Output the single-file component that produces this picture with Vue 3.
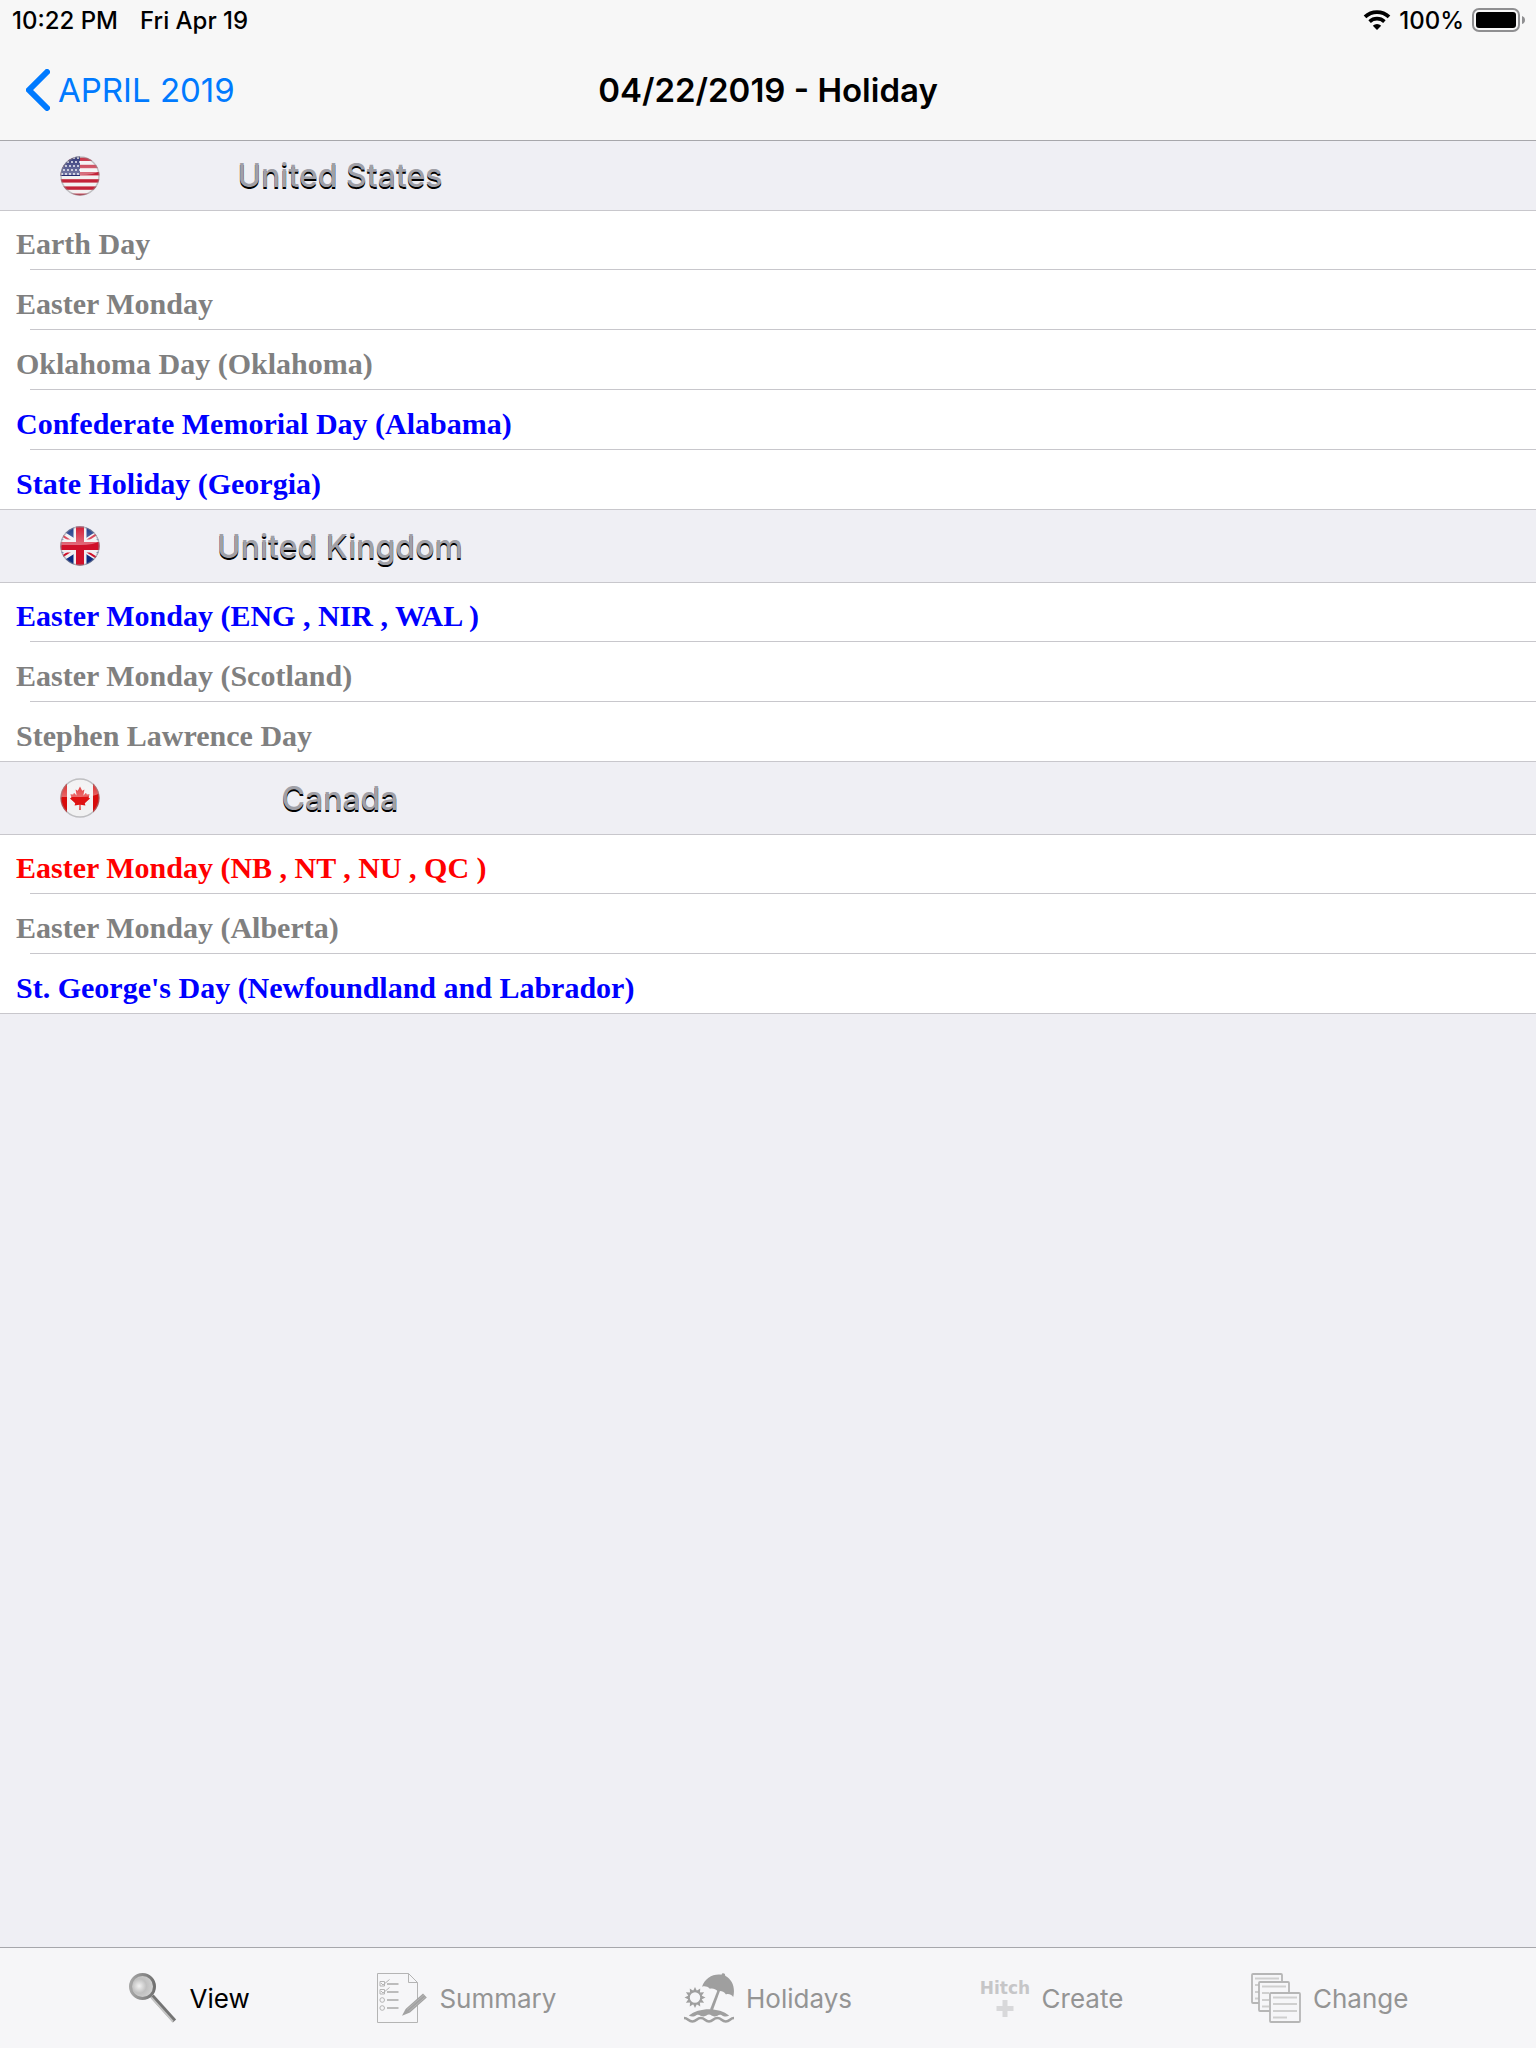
<script setup>
import { ref } from 'vue'

const activeTab = ref('view')

const sections = [
  {
    code: 'us',
    name: 'United States',
    holidays: [
      { title: 'Earth Day', type: 'normal' },
      { title: 'Easter Monday', type: 'normal' },
      { title: 'Oklahoma Day (Oklahoma)', type: 'normal' },
      { title: 'Confederate Memorial Day (Alabama)', type: 'regional' },
      { title: 'State Holiday (Georgia)', type: 'regional' }
    ]
  },
  {
    code: 'uk',
    name: 'United Kingdom',
    holidays: [
      { title: 'Easter Monday (ENG , NIR , WAL )', type: 'regional' },
      { title: 'Easter Monday (Scotland)', type: 'normal' },
      { title: 'Stephen Lawrence Day', type: 'normal' }
    ]
  },
  {
    code: 'ca',
    name: 'Canada',
    holidays: [
      { title: 'Easter Monday (NB , NT , NU , QC )', type: 'official' },
      { title: 'Easter Monday (Alberta)', type: 'normal' },
      { title: "St. George's Day (Newfoundland and Labrador)", type: 'regional' }
    ]
  }
]

const tabs = [
  { id: 'view', label: 'View' },
  { id: 'summary', label: 'Summary' },
  { id: 'holidays', label: 'Holidays' },
  { id: 'create', label: 'Create' },
  { id: 'change', label: 'Change' }
]

// rays of the sun in the Holidays icon
const rays = Array.from({ length: 12 }, (_, i) => i * 30)

// 5 rows of stars on the US flag
const stars = []
for (let row = 0; row < 5; row++) {
  for (let col = 0; col < 5; col++) {
    stars.push({ x: 2 + col * 4 + (row % 2) * 2, y: 2 + row * 4 })
  }
}
</script>

<template>
  <div class="page">
    <header class="top">
      <div class="status">
        <span>10:22 PM</span>
        <span>Fri Apr 19</span>
        <div class="status-right">
          <svg class="wifi" viewBox="0 0 28 20">
            <path d="M2 6.8 A17.5 17.5 0 0 1 26 6.8" fill="none" stroke="#000" stroke-width="3.8" />
            <path d="M6.6 11.6 A10.8 10.8 0 0 1 21.4 11.6" fill="none" stroke="#000" stroke-width="3.6" />
            <path d="M14 20 L9.8 15.8 A6 6 0 0 1 18.2 15.8 Z" />
          </svg>
          <span>100%</span>
          <svg class="battery" viewBox="0 0 54 24">
            <rect x="1" y="1" width="46" height="22" rx="6" fill="none" stroke="#8f8f91" stroke-width="2" />
            <rect x="4" y="4" width="40" height="16" rx="3" />
            <path d="M50 8 Q53 9 53 12 Q53 15 50 16 Z" fill="#8f8f91" />
          </svg>
        </div>
      </div>
      <nav class="navbar">
        <a class="back" href="#">
          <svg class="chevron" viewBox="0 0 24 42">
            <path d="M21 3 L3 21 L21 39" fill="none" stroke="#007aff" stroke-width="6" stroke-linecap="round" />
          </svg>
          <span>APRIL 2019</span>
        </a>
        <h1>04/22/2019 - Holiday</h1>
      </nav>
    </header>

    <main class="content">
      <section v-for="section in sections" :key="section.code" class="section">
        <div class="section-head">
          <svg class="flag" viewBox="0 0 40 40">
            <defs>
              <clipPath :id="`clip-${section.code}`"><circle cx="20" cy="20" r="19.5" /></clipPath>
              <linearGradient :id="`gloss-${section.code}`" x1="0" y1="0" x2="0" y2="1">
                <stop offset="0" stop-color="#fff" stop-opacity="0.05" />
                <stop offset="1" stop-color="#fff" stop-opacity="0.4" />
              </linearGradient>
            </defs>
            <g :clip-path="`url(#clip-${section.code})`">
              <g v-if="section.code === 'us'">
                <rect width="40" height="40" fill="#f3f1f2" />
                <rect v-for="n in 6" :key="n" y="0" width="40" height="3.4" :transform="`translate(0 ${(n - 1) * 7.2 + 1.6})`" fill="#c32338" />
                <rect width="20" height="20" fill="#262b70" />
                <circle v-for="(s, i) in stars" :key="i" :cx="s.x" :cy="s.y" r="0.9" fill="#fff" />
              </g>
              <g v-else-if="section.code === 'uk'">
                <rect width="40" height="40" fill="#0d2b80" />
                <path d="M-14 -2 L54 42 M54 -2 L-14 42" stroke="#f0eff2" stroke-width="7" />
                <path d="M-14 -1 L20 21 M54 -3 L20 19 M-14 41 L20 19 M54 43 L20 21" stroke="#d0102a" stroke-width="2" />
                <path d="M20 0 V40 M0 20 H40" stroke="#f0eff2" stroke-width="13" />
                <path d="M20 0 V40 M0 20 H40" stroke="#d0102a" stroke-width="8" />
              </g>
              <g v-else>
                <rect width="40" height="40" fill="#f1f1f2" />
                <rect width="7" height="40" fill="#d80a0a" />
                <rect x="33" width="7" height="40" fill="#d80a0a" />
                <path
                  d="M20 8.5 L22.2 12.8 L24.4 11.6 L23.4 17.4 L26 14.8 L26.8 16.6 L29.6 16.2 L28.6 19.6 L30 20.6 L24.8 25.2 L25.4 27.4 L20.5 26.8 L20.7 32 H19.3 L19.5 26.8 L14.6 27.4 L15.2 25.2 L10 20.6 L11.4 19.6 L10.4 16.2 L13.2 16.6 L14 14.8 L16.6 17.4 L15.6 11.6 L17.8 12.8 Z"
                  fill="#df1212" />
              </g>
              <path d="M0 0 H40 V15 Q34 19 20 19 T2 19 L0 20 Z" :fill="`url(#gloss-${section.code})`" />
            </g>
            <circle cx="20" cy="20" r="19" fill="none" stroke="#8c8c90" stroke-opacity="0.5" stroke-width="1.4" />
          </svg>
          <h2>{{ section.name }}</h2>
        </div>
        <ul class="rows">
          <li v-for="holiday in section.holidays" :key="holiday.title" :class="holiday.type">
            {{ holiday.title }}
          </li>
        </ul>
      </section>
    </main>

    <nav class="tabbar">
      <button
        v-for="tab in tabs"
        :key="tab.id"
        type="button"
        class="tab"
        :class="{ active: activeTab === tab.id }"
        @click="activeTab = tab.id">
        <svg class="tab-icon" viewBox="0 0 50 50">
          <g v-if="tab.id === 'view'">
            <defs>
              <radialGradient id="lens" cx="0.36" cy="0.48" r="0.6">
                <stop offset="0" stop-color="#f2f2f2" />
                <stop offset="0.5" stop-color="#c0c0c0" />
                <stop offset="1" stop-color="#d2d2d2" />
              </radialGradient>
              <linearGradient id="rim">
                <stop offset="0" stop-color="#a6a6a6" />
                <stop offset="1" stop-color="#717171" />
              </linearGradient>
            </defs>
            <path d="M24 23 L46.5 48" stroke="#747474" stroke-width="4.4" />
            <path d="M23.2 24.4 L45 48.6" stroke="#c4c4c4" stroke-width="1.8" />
            <circle cx="14.5" cy="13.5" r="12" fill="url(#lens)" stroke="url(#rim)" stroke-width="3" />
          </g>
          <g v-else-if="tab.id === 'summary'" fill="none" stroke="#b4b4b4">
            <path d="M31.5 0.5 H0.5 V49.5 H40.5 V9.5 Z V9.5 H40.5" />
            <path d="M10 11 H21.5 M10 19 H21.5 M10 27 H21.5 M10 35 H21.5" stroke="#bcbcbc" stroke-width="2" />
            <path d="M3 8.5 H7.5 V13 H3 Z M3 16.5 H7.5 V21 H3 Z M4 10 L6 12 L12.5 6.5 M4 18 L6 20 L12.5 14.5" />
            <circle cx="5.2" cy="27" r="2.3" />
            <circle cx="5.2" cy="35" r="2.3" />
            <path d="M46 20.5 L49.8 24.5 L33 39.5 L25 42.8 L28.6 36 Z" fill="#a2a2a2" stroke="none" />
            <path d="M30 36.5 L47 21.8 M31.8 38.4 L48.8 23.6" stroke="#bdbdbd" stroke-width="0.7" />
          </g>
          <g v-else-if="tab.id === 'holidays'" fill="#9f9f9f">
            <path v-for="angle in rays" :key="angle" d="M9 18.2 L11 14 L13 18.2 Z" :transform="`rotate(${angle} 11 24.5)`" />
            <circle cx="11" cy="24.5" r="6.2" fill="#f6f6f8" stroke="#9f9f9f" stroke-width="2" />
            <path d="M18 13.8 C21 5 29 0.6 37.5 1.8 C38 -0.4 41.4 -0.2 41.2 2.8 C48.5 6.6 51.5 15 49.2 24 C47 21.4 44.8 20.6 42 21.4 C39.6 18.4 36.8 17.6 34 18.4 C31 15.6 28.6 15 25.8 15.8 C23.4 13.4 20.6 12.8 18 13.8 Z" />
            <path d="M33.6 17 L36 17.8 L28.8 37.4 L26 36.4 Z" />
            <path d="M4.8 42.5 C15 34 35 34 45.2 42.5 C42.2 44.4 39.8 43.6 37.4 42 C34.6 40.8 33.6 43.5 30.4 43.5 C28 43.5 27 41.6 25 41.6 C23 41.6 22 43.5 19.6 43.5 C16.4 43.5 15.4 40.8 12.6 42 C10.2 43.6 7.8 44.4 4.8 42.5 Z" />
            <path d="M0 45 C4.2 45 4.2 48.5 8.4 48.5 S12.6 45 16.8 45 S21 48.5 25 48.5 S29.2 45 33.4 45 S37.6 48.5 41.8 48.5 S46 45 50 45" fill="none" stroke="#9f9f9f" stroke-width="2.6" />
          </g>
          <g v-else-if="tab.id === 'create'">
            <text class="hitch" x="25" y="21" text-anchor="middle">Hitch</text>
            <path d="M25 27 V44 M16.5 35.5 H33.5" stroke="#d8d8da" stroke-width="5" />
          </g>
          <g v-else fill="#f6f6f8" stroke="#b6b6b6" stroke-width="1.8">
            <rect x="1" y="1" width="30" height="29" rx="1" />
            <path d="M4 5.5 H28 M4 12 H8 M4 19 H8 M4 25.5 H8" stroke="#cfcfcf" />
            <rect x="8" y="9" width="30" height="29" rx="1" />
            <path d="M11 13.5 H35 M11 20 H18 M11 27 H18 M11 33.5 H18" stroke="#cfcfcf" />
            <rect x="19" y="20" width="30" height="29" rx="1" />
            <path d="M22 24.5 H46 M22 31 H46 M22 38 H46 M22 44.5 H36" stroke="#cfcfcf" />
          </g>
        </svg>
        <span>{{ tab.label }}</span>
      </button>
    </nav>
  </div>
</template>

<style>
body {
  margin: 0;
  background: #efeff4;
}
</style>

<style scoped>
.page {
  display: flex;
  flex-direction: column;
  min-height: 100vh;
  font-family: Inter, "Liberation Sans", sans-serif;
  color: #000;
}

.top {
  background: #f7f7f7;
  border-bottom: 1px solid #a7a7ab;
}

.status {
  display: flex;
  align-items: center;
  gap: 22px;
  height: 40px;
  padding: 0 10px 0 12px;
  font-size: 24px;
  font-weight: 500;
}

.status-right {
  display: flex;
  align-items: center;
  gap: 8px;
  margin-left: auto;
}

.wifi {
  width: 28px;
  height: 20px;
}

.battery {
  width: 54px;
  height: 24px;
}

.navbar {
  display: grid;
  grid-template-columns: 1fr auto 1fr;
  align-items: center;
  height: 100px;
  padding: 0 26px;
}

.back {
  display: flex;
  align-items: center;
  gap: 8px;
  font-size: 33px;
  color: #007aff;
  text-decoration: none;
}

.chevron {
  width: 24px;
  height: 42px;
}

h1 {
  margin: 0;
  font-size: 33px;
  font-weight: 600;
}

.content {
  flex: 1;
}

.section-head {
  display: flex;
  align-items: center;
  height: 72px;
  padding-left: 60px;
  border-bottom: 1px solid #c8c7cc;
}

.section:first-child .section-head {
  height: 69px;
}

.flag {
  width: 40px;
  height: 40px;
}

h2 {
  width: 480px;
  margin: 0;
  font-size: 32px;
  font-weight: 500;
  text-align: center;
  color: #a0a0a7;
  text-shadow: 0 2px 0 #000;
}

.rows {
  margin: 0;
  padding: 0;
  list-style: none;
  background: #fff;
  border-bottom: 1px solid #c8c7cc;
}

.rows li {
  height: 60px;
  padding-left: 16px;
  font-family: "Liberation Serif", "Times New Roman", serif;
  font-size: 30px;
  font-weight: bold;
  line-height: 68px;
  box-sizing: border-box;
  background: linear-gradient(#c8c7cc, #c8c7cc) 30px 100% / 100% 1px no-repeat;
}

.rows li:first-child {
  height: 59px;
  line-height: 66px;
}

.rows li:last-child {
  height: 59px;
  background: none;
}

.normal {
  color: #808080;
}

.regional {
  color: #0000ff;
}

.official {
  color: #ff0000;
}

.tabbar {
  display: flex;
  justify-content: space-evenly;
  align-items: center;
  height: 100px;
  background: #f6f6f8;
  border-top: 1px solid #a7a7ab;
}

.tab {
  display: flex;
  align-items: center;
  gap: 12px;
  padding: 0;
  border: none;
  background: none;
  font-family: inherit;
  font-size: 26px;
  color: #949494;
  cursor: pointer;
}

.tab.active {
  color: #000;
}

.tab-icon {
  width: 50px;
  height: 50px;
}

.hitch {
  font-family: "DejaVu Sans", sans-serif;
  font-size: 17px;
  font-weight: bold;
  fill: #c6c6c8;
}
</style>
